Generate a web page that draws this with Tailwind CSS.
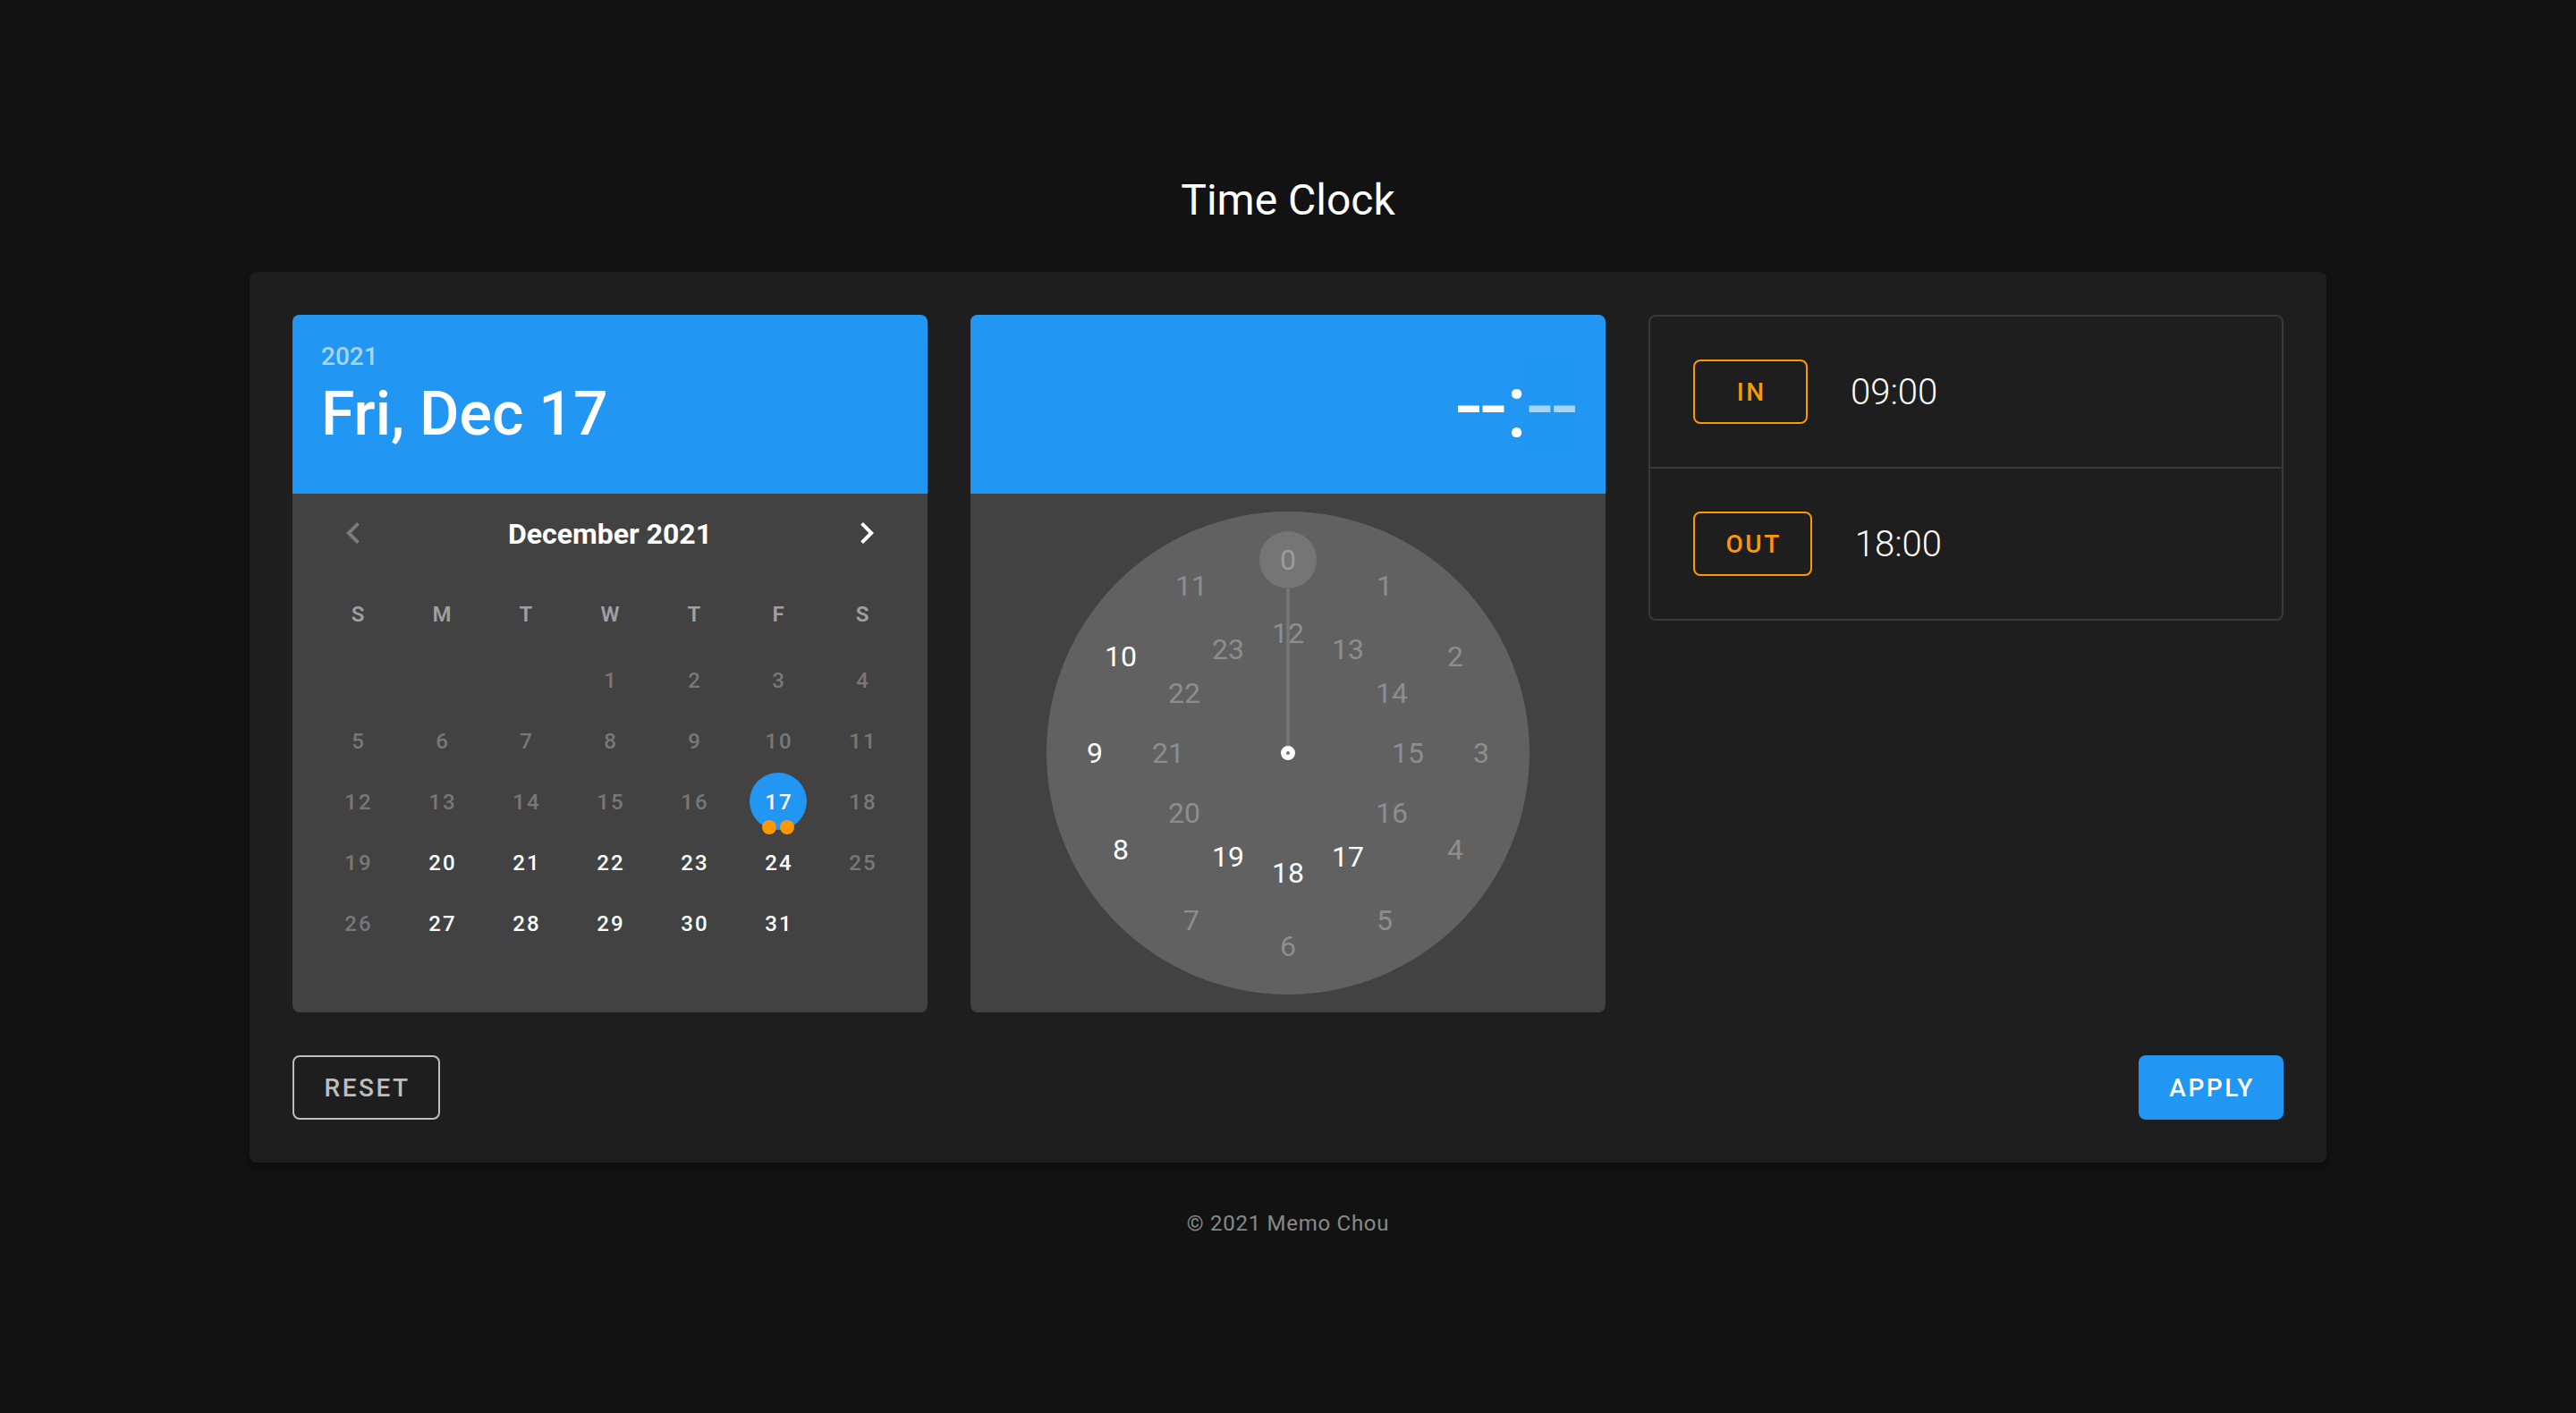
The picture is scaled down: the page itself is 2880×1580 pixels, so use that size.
<!DOCTYPE html>
<html lang="en">
<head>
<meta charset="utf-8">
<meta name="viewport" content="width=device-width, initial-scale=1">
<title>Time Clock</title>
<script src="https://cdn.jsdelivr.net/npm/@tailwindcss/browser@4"></script>
</head>
<body class="flex min-h-screen flex-col items-center justify-center bg-[#121212] px-6 font-[Roboto,sans-serif] text-white">
<h1 class="text-5xl/[64px]">Time Clock</h1>

<main class="my-12 w-full max-w-[2322px] rounded-lg bg-[#1e1e1e] p-12 shadow-[0_6px_2px_-4px_#00000033,0_4px_4px_0_#00000024,0_2px_10px_0_#0000001f]">
  <div class="grid grid-cols-3 items-start gap-12">

    <!-- Date picker -->
    <section aria-label="Date" class="h-[780px] overflow-hidden rounded-lg bg-[#424242]">
      <header class="h-[200px] bg-[#2196f3] px-8 pt-[33px] font-medium">
        <p class="mb-4 text-[28px]/[28px] opacity-60">2021</p>
        <h2 class="text-[68px]/[68px]">Fri, Dec 17</h2>
      </header>
      <div class="flex items-center justify-between px-8 py-2">
        <button type="button" disabled aria-label="Previous month" class="flex size-[72px] items-center justify-center rounded-full text-white/30">
          <svg class="size-12" viewBox="0 0 24 24" fill="currentColor" aria-hidden="true"><path d="M15.41,16.58L10.83,12L15.41,7.41L14,6L8,12L14,18L15.41,16.58Z"/></svg>
        </button>
        <button type="button" class="pt-0.5 text-[32px]/[32px] font-bold">December 2021</button>
        <button type="button" aria-label="Next month" class="flex size-[72px] items-center justify-center rounded-full">
          <svg class="size-12" viewBox="0 0 24 24" fill="currentColor" aria-hidden="true"><path d="M8.59,16.58L13.17,12L8.59,7.41L10,6L16,12L10,18L8.59,16.58Z"/></svg>
        </button>
      </div>
      <div class="px-[26px] pt-2">
        <table class="w-full table-fixed text-center text-2xl/[24px] font-medium">
          <thead>
            <tr class="h-[78px] text-white/50 [&>th]:font-semibold"><th>S</th><th>M</th><th>T</th><th>W</th><th>T</th><th>F</th><th>S</th></tr>
          </thead>
          <tbody class="[&_button]:size-16 [&_button]:rounded-full [&_button]:pt-0.5 [&_button]:indent-[0.09em] [&_button]:tracking-[0.09em] [&_button:disabled]:text-white/30 [&_tr]:h-[68px]">
            <tr><td></td><td></td><td></td><td><button disabled>1</button></td><td><button disabled>2</button></td><td><button disabled>3</button></td><td><button disabled>4</button></td></tr>
            <tr><td><button disabled>5</button></td><td><button disabled>6</button></td><td><button disabled>7</button></td><td><button disabled>8</button></td><td><button disabled>9</button></td><td><button disabled>10</button></td><td><button disabled>11</button></td></tr>
            <tr><td><button disabled>12</button></td><td><button disabled>13</button></td><td><button disabled>14</button></td><td><button disabled>15</button></td><td><button disabled>16</button></td><td><button class="relative bg-[#2196f3]">17<span class="absolute inset-x-0 -bottom-[5px] flex justify-center gap-1"><i class="size-4 rounded-full bg-[#ff9800]"></i><i class="size-4 rounded-full bg-[#ff9800]"></i></span></button></td><td><button disabled>18</button></td></tr>
            <tr><td><button disabled>19</button></td><td><button>20</button></td><td><button>21</button></td><td><button>22</button></td><td><button>23</button></td><td><button>24</button></td><td><button disabled>25</button></td></tr>
            <tr><td><button disabled>26</button></td><td><button>27</button></td><td><button>28</button></td><td><button>29</button></td><td><button>30</button></td><td><button>31</button></td><td></td></tr>
          </tbody>
        </table>
      </div>
    </section>

    <!-- Time picker -->
    <section aria-label="Time" class="h-[780px] overflow-hidden rounded-lg bg-[#424242]">
      <header class="flex h-[200px] items-center justify-end bg-[#2196f3] px-8 pt-1 text-[100px]/[100px]">
        <button type="button" aria-label="Hours">--</button><span>:</span><button type="button" aria-label="Minutes" class="opacity-60">--</button>
      </header>
      <div class="flex justify-center py-5">
        <!-- Clock face: numbers sit on two rings of radius 216 and 134 -->
        <div class="relative size-[540px] rounded-full bg-[#616161] text-[32px]/[32px] [&>button]:absolute [&>button]:size-16 [&>button]:-translate-1/2 [&>button]:rounded-full [&>button:disabled]:text-white/30">
          <button disabled class="top-[54px] left-[270px] bg-[#757575]">0</button>
          <button disabled class="top-[83px] left-[378px]">1</button>
          <button disabled class="top-[162px] left-[457px]">2</button>
          <button disabled class="top-[270px] left-[486px]">3</button>
          <button disabled class="top-[378px] left-[457px]">4</button>
          <button disabled class="top-[457px] left-[378px]">5</button>
          <button disabled class="top-[486px] left-[270px]">6</button>
          <button disabled class="top-[457px] left-[162px]">7</button>
          <button class="top-[378px] left-[83px]">8</button>
          <button class="top-[270px] left-[54px]">9</button>
          <button class="top-[162px] left-[83px]">10</button>
          <button disabled class="top-[83px] left-[162px]">11</button>
          <button disabled class="top-[136px] left-[270px]">12</button>
          <button disabled class="top-[154px] left-[337px]">13</button>
          <button disabled class="top-[203px] left-[386px]">14</button>
          <button disabled class="top-[270px] left-[404px]">15</button>
          <button disabled class="top-[337px] left-[386px]">16</button>
          <button class="top-[386px] left-[337px]">17</button>
          <button class="top-[404px] left-[270px]">18</button>
          <button class="top-[386px] left-[203px]">19</button>
          <button disabled class="top-[337px] left-[154px]">20</button>
          <button disabled class="top-[270px] left-[136px]">21</button>
          <button disabled class="top-[203px] left-[154px]">22</button>
          <button disabled class="top-[154px] left-[203px]">23</button>
          <span class="absolute top-[86px] left-[268px] h-[184px] w-1 bg-[#757575]"></span>
          <span class="absolute top-[262px] left-[262px] size-4 rounded-full border-[6px] border-white bg-[#757575]"></span>
        </div>
      </div>
    </section>

    <!-- Recorded times -->
    <ul class="divide-y-2 divide-[#393939] rounded-lg border-2 border-[#393939] text-[40px]/[40px] font-light">
      <li class="flex items-center gap-12 p-12">
        <button type="button" class="h-[72px] min-w-32 rounded-lg border-2 border-[#ff9800] px-8 pt-0.5 indent-[0.09em] text-[28px]/[28px] font-medium tracking-[0.09em] text-[#ff9800]">IN</button>
        <time class="pt-0.5">09:00</time>
      </li>
      <li class="flex items-center gap-12 p-12">
        <button type="button" class="h-[72px] min-w-32 rounded-lg border-2 border-[#ff9800] px-8 pt-0.5 indent-[0.09em] text-[28px]/[28px] font-medium tracking-[0.09em] text-[#ff9800]">OUT</button>
        <time class="pt-0.5">18:00</time>
      </li>
    </ul>
  </div>

  <div class="mt-12 flex justify-between text-[28px]/[28px] font-medium">
    <button type="button" class="h-[72px] rounded-lg border-2 border-[#bdbdbd] px-[31px] pt-0.5 indent-[0.09em] tracking-[0.09em] text-[#bdbdbd]">RESET</button>
    <button type="button" class="h-[72px] rounded-lg bg-[#2196f3] px-8 pt-0.5 indent-[0.09em] tracking-[0.09em]">APPLY</button>
  </div>
</main>

<footer class="text-2xl/[40px] tracking-[0.03em] text-white/50">© 2021 Memo Chou</footer>
</body>
</html>
